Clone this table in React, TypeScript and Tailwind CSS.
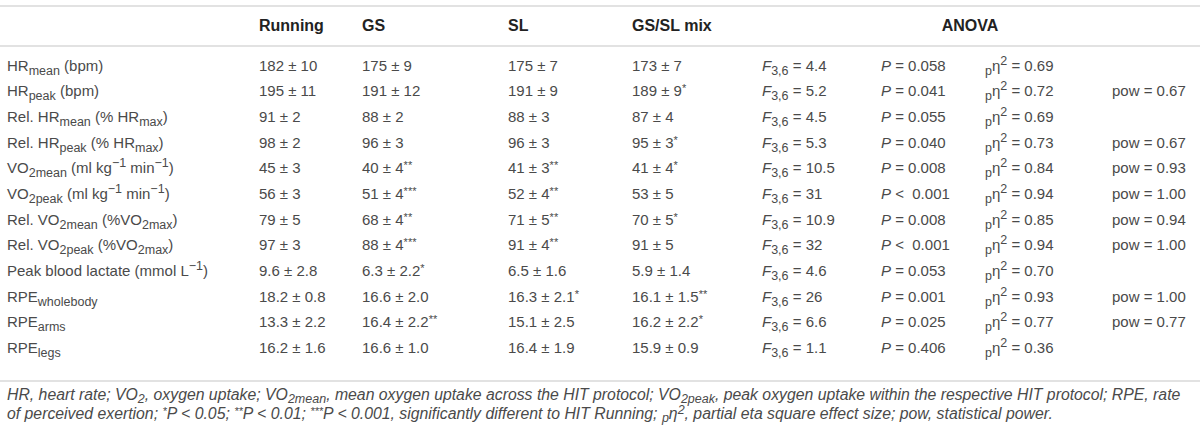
import React from "react";

const Sub = ({ children }: { children: React.ReactNode }) => (
  <span className="relative top-[4px] text-[12.5px] leading-none">{children}</span>
);
const Sup = ({ children }: { children: React.ReactNode }) => (
  <span className="relative top-[-6px] text-[12.5px] leading-none">{children}</span>
);
const FSub = ({ children }: { children: React.ReactNode }) => (
  <span className="relative top-[3px] text-[12.5px] leading-none">{children}</span>
);
const FSup = ({ children }: { children: React.ReactNode }) => (
  <span className="relative top-[-5px] text-[12.5px] leading-none">{children}</span>
);
const Star = ({ n }: { n: number }) => (
  <span className="relative top-[-4px] text-[11px] leading-none">{"*".repeat(n)}</span>
);

const V = ({ v, s = 0 }: { v: string; s?: number }) => (
  <span>
    {v}
    {s > 0 && <Star n={s} />}
  </span>
);

const F = ({ v }: { v: string }) => (
  <span>
    <i>F</i>
    <Sub>3,6</Sub> = {v}
  </span>
);
const P = ({ v }: { v: string }) => (
  <span>
    <i>P</i> {v}
  </span>
);
const Eta = ({ v }: { v: string }) => (
  <span>
    <Sub>p</Sub>η<Sup>2</Sup> = {v}
  </span>
);

type Row = {
  label: React.ReactNode;
  vals: [string, number][];
  f: string;
  p: string;
  eta: string;
  pow?: string;
};

const neg1 = <Sup>−1</Sup>;

const rows: Row[] = [
  { label: <>HR<Sub>mean</Sub> (bpm)</>, vals: [["182 ± 10", 0], ["175 ± 9", 0], ["175 ± 7", 0], ["173 ± 7", 0]], f: "4.4", p: "= 0.058", eta: "0.69" },
  { label: <>HR<Sub>peak</Sub> (bpm)</>, vals: [["195 ± 11", 0], ["191 ± 12", 0], ["191 ± 9", 0], ["189 ± 9", 1]], f: "5.2", p: "= 0.041", eta: "0.72", pow: "0.67" },
  { label: <>Rel. HR<Sub>mean</Sub> (% HR<Sub>max</Sub>)</>, vals: [["91 ± 2", 0], ["88 ± 2", 0], ["88 ± 3", 0], ["87 ± 4", 0]], f: "4.5", p: "= 0.055", eta: "0.69" },
  { label: <>Rel. HR<Sub>peak</Sub> (% HR<Sub>max</Sub>)</>, vals: [["98 ± 2", 0], ["96 ± 3", 0], ["96 ± 3", 0], ["95 ± 3", 1]], f: "5.3", p: "= 0.040", eta: "0.73", pow: "0.67" },
  { label: <>VO<Sub>2mean</Sub> (ml kg{neg1} min{neg1})</>, vals: [["45 ± 3", 0], ["40 ± 4", 2], ["41 ± 3", 2], ["41 ± 4", 1]], f: "10.5", p: "= 0.008", eta: "0.84", pow: "0.93" },
  { label: <>VO<Sub>2peak</Sub> (ml kg{neg1} min{neg1})</>, vals: [["56 ± 3", 0], ["51 ± 4", 3], ["52 ± 4", 2], ["53 ± 5", 0]], f: "31", p: "<  0.001", eta: "0.94", pow: "1.00" },
  { label: <>Rel. VO<Sub>2mean</Sub> (%VO<Sub>2max</Sub>)</>, vals: [["79 ± 5", 0], ["68 ± 4", 2], ["71 ± 5", 2], ["70 ± 5", 1]], f: "10.9", p: "= 0.008", eta: "0.85", pow: "0.94" },
  { label: <>Rel. VO<Sub>2peak</Sub> (%VO<Sub>2max</Sub>)</>, vals: [["97 ± 3", 0], ["88 ± 4", 3], ["91 ± 4", 2], ["91 ± 5", 0]], f: "32", p: "<  0.001", eta: "0.94", pow: "1.00" },
  { label: <>Peak blood lactate (mmol L{neg1})</>, vals: [["9.6 ± 2.8", 0], ["6.3 ± 2.2", 1], ["6.5 ± 1.6", 0], ["5.9 ± 1.4", 0]], f: "4.6", p: "= 0.053", eta: "0.70" },
  { label: <>RPE<Sub>wholebody</Sub></>, vals: [["18.2 ± 0.8", 0], ["16.6 ± 2.0", 0], ["16.3 ± 2.1", 1], ["16.1 ± 1.5", 2]], f: "26", p: "= 0.001", eta: "0.93", pow: "1.00" },
  { label: <>RPE<Sub>arms</Sub></>, vals: [["13.3 ± 2.2", 0], ["16.4 ± 2.2", 2], ["15.1 ± 2.5", 0], ["16.2 ± 2.2", 1]], f: "6.6", p: "= 0.025", eta: "0.77", pow: "0.77" },
  { label: <>RPE<Sub>legs</Sub></>, vals: [["16.2 ± 1.6", 0], ["16.6 ± 1.0", 0], ["16.4 ± 1.9", 0], ["15.9 ± 0.9", 0]], f: "1.1", p: "= 0.406", eta: "0.36" },
];

const cols = "grid grid-cols-[252px_103px_146px_124px_130px_119px_104px_127px_1fr]";

export default function App() {
  return (
    <div
      className="w-[1200px] h-[433px] bg-white text-[#4a4a4a] overflow-hidden"
      style={{ fontFamily: '"Liberation Sans", Arial, sans-serif' }}
    >
      <div className="pt-[5px]">
        <div className="border-t-2 border-[#e2e2e2]" />
        <div className={`${cols} pl-[7px] h-[38px] items-center text-[16px] font-bold text-[#222222]`}>
          <div />
          <div>Running</div>
          <div>GS</div>
          <div>SL</div>
          <div>GS/SL mix</div>
          <div className="col-span-4 text-center pr-[22px]">ANOVA</div>
        </div>
        <div className="border-t-2 border-[#e2e2e2]" />
        <div className="pt-[6px] pb-[19px]">
          {rows.map((r, i) => (
            <div key={i} className={`${cols} pl-[7px] h-[25.7px] items-center text-[15px] whitespace-pre`}>
              <div>{r.label}</div>
              {r.vals.map(([v, s], j) => (
                <div key={j}>
                  <V v={v} s={s} />
                </div>
              ))}
              <div>
                <F v={r.f} />
              </div>
              <div>
                <P v={r.p} />
              </div>
              <div>
                <Eta v={r.eta} />
              </div>
              <div>{r.pow ? `pow = ${r.pow}` : ""}</div>
            </div>
          ))}
        </div>
        <div className="border-t-2 border-[#e2e2e2]" />
        <div className="pl-[7px] pt-[3px] text-[15.8px] leading-[19px] italic whitespace-nowrap">
          <div>
            HR, heart rate; VO<FSub>2</FSub>, oxygen uptake; VO<FSub>2mean</FSub>, mean oxygen uptake across the HIT protocol; VO
            <FSub>2peak</FSub>, peak oxygen uptake within the respective HIT protocol; RPE, rate
          </div>
          <div>
            of perceived exertion; <Star n={1} />P &lt; 0.05; <Star n={2} />P &lt; 0.01; <Star n={3} />P &lt; 0.001, significantly
            different to HIT Running; <FSub>p</FSub>η<FSup>2</FSup>, partial eta square effect size; pow, statistical power.
          </div>
        </div>
      </div>
    </div>
  );
}
